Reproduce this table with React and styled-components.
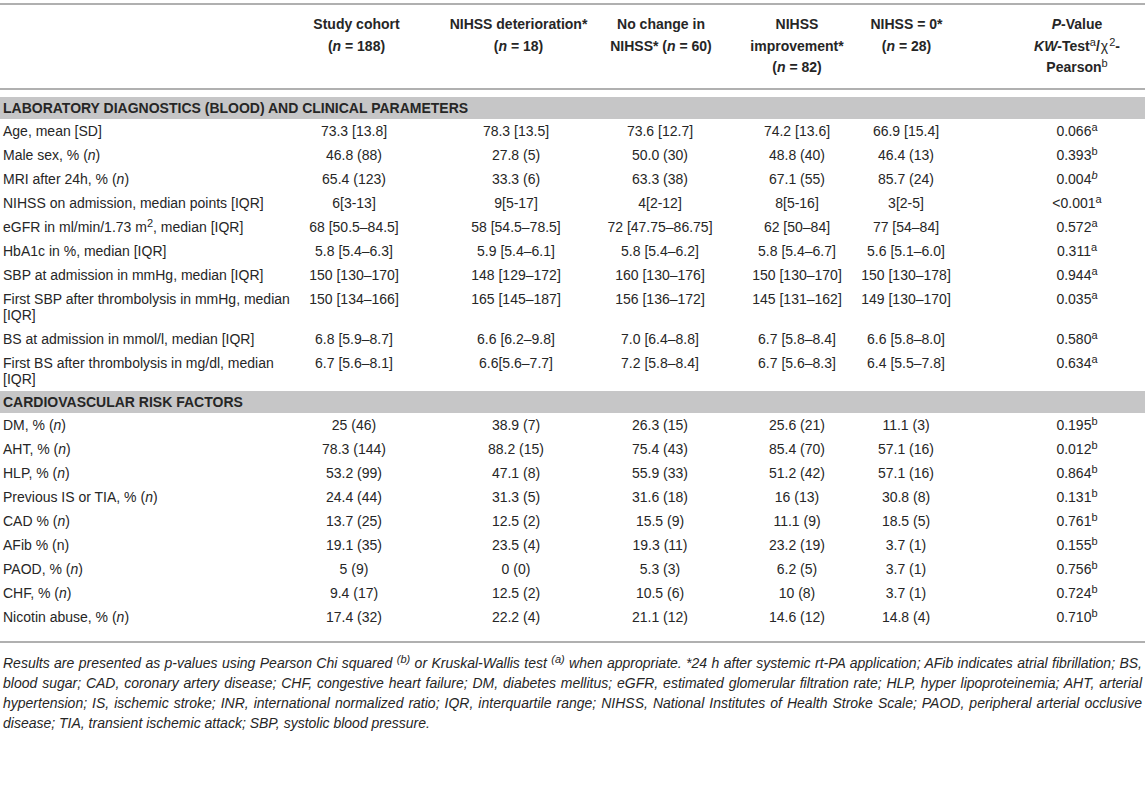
import React from 'react'
import styled, { createGlobalStyle } from 'styled-components'

const GRID = '302px 100px 188px 140px 130px 130px 155px'
const SHIFTS = [2, 20, 0, 2, -19, 9.5]
const HEAD_SHIFTS = [4.5, 22.5, 1, 2, -18.5, 9.5]

const GlobalStyle = createGlobalStyle`
  body {
    margin: 0;
    background: #ffffff;
  }
`

const Page = styled.div`
  width: 1145px;
  padding-top: 3px;
  font-family: "Liberation Sans", Arial, Helvetica, sans-serif;
  font-size: 14px;
  color: #262626;
`

const Table = styled.div`
  border-bottom: 2px solid #b0b0b0;
  padding-bottom: 12px;
`

const Row = styled.div`
  display: grid;
  grid-template-columns: ${GRID};
  padding: 4px 0;
  line-height: 16px;
`

const HeadRow = styled(Row)`
  border-top: 2px solid #b0b0b0;
  border-bottom: 2px solid #b0b0b0;
  padding: 9px 0 9px;
  margin-bottom: 7px;
  line-height: 21.5px;
  font-weight: bold;
`

const Label = styled.div`
  padding: 0 6px 0 3px;
`

const Cell = styled.div`
  text-align: center;
  white-space: nowrap;
  padding-left: ${(p) => Math.max(0, p.$shift * 2)}px;
  padding-right: ${(p) => Math.max(0, -p.$shift * 2)}px;
`

const Band = styled.div`
  height: 22px;
  line-height: 22px;
  padding-left: 3px;
  background: #c6c6c7;
  font-weight: bold;
`

const Sup = styled.sup`
  font-size: 11px;
  line-height: 0;
  vertical-align: 0.5em;
  font-weight: normal;
`

const Light = styled.span`
  font-weight: normal;
  margin: 0 1px;
`

const Notes = styled.div`
  padding: 10px 3px 0;
  font-size: 14px;
  font-style: italic;
  line-height: 20px;
`

const NoteLine = styled.div`
  text-align: justify;
  text-align-last: ${(p) => (p.$last ? 'left' : 'justify')};
`

const n = <i>n</i>

const header = [
  <>Study cohort<br />({n} = 188)</>,
  <>NIHSS deterioration*<br />({n} = 18)</>,
  <>No change in<br />NIHSS* ({n} = 60)</>,
  <>NIHSS<br />improvement*<br />({n} = 82)</>,
  <>NIHSS = 0*<br />({n} = 28)</>,
  <>
    <i>P</i>-Value
    <br />
    <i>KW</i>-Test<Sup>a</Sup>/<Light>χ</Light><Sup>2</Sup>-
    <br />
    Pearson<Sup>b</Sup>
  </>,
]

const pA = (v) => <>{v}<Sup>a</Sup></>
const pB = (v) => <>{v}<Sup>b</Sup></>
const pBi = (v) => <>{v}<Sup><i>b</i></Sup></>

const sections = [
  {
    title: 'LABORATORY DIAGNOSTICS (BLOOD) AND CLINICAL PARAMETERS',
    rows: [
      ['Age, mean [SD]', '73.3 [13.8]', '78.3 [13.5]', '73.6 [12.7]', '74.2 [13.6]', '66.9 [15.4]', pA('0.066')],
      [<>Male sex, % ({n})</>, '46.8 (88)', '27.8 (5)', '50.0 (30)', '48.8 (40)', '46.4 (13)', pB('0.393')],
      [<>MRI after 24h, % ({n})</>, '65.4 (123)', '33.3 (6)', '63.3 (38)', '67.1 (55)', '85.7 (24)', pBi('0.004')],
      ['NIHSS on admission, median points [IQR]', '6[3-13]', '9[5-17]', '4[2-12]', '8[5-16]', '3[2-5]', pA('<0.001')],
      [<>eGFR in ml/min/1.73 m<Sup>2</Sup>, median [IQR]</>, '68 [50.5–84.5]', '58 [54.5–78.5]', '72 [47.75–86.75]', '62 [50–84]', '77 [54–84]', pA('0.572')],
      ['HbA1c in %, median [IQR]', '5.8 [5.4–6.3]', '5.9 [5.4–6.1]', '5.8 [5.4–6.2]', '5.8 [5.4–6.7]', '5.6 [5.1–6.0]', pA('0.311')],
      ['SBP at admission in mmHg, median [IQR]', '150 [130–170]', '148 [129–172]', '160 [130–176]', '150 [130–170]', '150 [130–178]', pA('0.944')],
      ['First SBP after thrombolysis in mmHg, median [IQR]', '150 [134–166]', '165 [145–187]', '156 [136–172]', '145 [131–162]', '149 [130–170]', pA('0.035')],
      ['BS at admission in mmol/l, median [IQR]', '6.8 [5.9–8.7]', '6.6 [6.2–9.8]', '7.0 [6.4–8.8]', '6.7 [5.8–8.4]', '6.6 [5.8–8.0]', pA('0.580')],
      ['First BS after thrombolysis in mg/dl, median [IQR]', '6.7 [5.6–8.1]', '6.6[5.6–7.7]', '7.2 [5.8–8.4]', '6.7 [5.6–8.3]', '6.4 [5.5–7.8]', pA('0.634')],
    ],
  },
  {
    title: 'CARDIOVASCULAR RISK FACTORS',
    rows: [
      [<>DM, % ({n})</>, '25 (46)', '38.9 (7)', '26.3 (15)', '25.6 (21)', '11.1 (3)', pB('0.195')],
      [<>AHT, % ({n})</>, '78.3 (144)', '88.2 (15)', '75.4 (43)', '85.4 (70)', '57.1 (16)', pB('0.012')],
      [<>HLP, % ({n})</>, '53.2 (99)', '47.1 (8)', '55.9 (33)', '51.2 (42)', '57.1 (16)', pB('0.864')],
      [<>Previous IS or TIA, % ({n})</>, '24.4 (44)', '31.3 (5)', '31.6 (18)', '16 (13)', '30.8 (8)', pB('0.131')],
      [<>CAD % ({n})</>, '13.7 (25)', '12.5 (2)', '15.5 (9)', '11.1 (9)', '18.5 (5)', pB('0.761')],
      ['AFib % (n)', '19.1 (35)', '23.5 (4)', '19.3 (11)', '23.2 (19)', '3.7 (1)', pB('0.155')],
      [<>PAOD, % ({n})</>, '5 (9)', '0 (0)', '5.3 (3)', '6.2 (5)', '3.7 (1)', pB('0.756')],
      [<>CHF, % ({n})</>, '9.4 (17)', '12.5 (2)', '10.5 (6)', '10 (8)', '3.7 (1)', pB('0.724')],
      [<>Nicotin abuse, % ({n})</>, '17.4 (32)', '22.2 (4)', '21.1 (12)', '14.6 (12)', '14.8 (4)', pB('0.710')],
    ],
  },
]

const notes = [
  <>Results are presented as p-values using Pearson Chi squared <Sup>(b)</Sup> or Kruskal-Wallis test <Sup>(a)</Sup> when appropriate. *24 h after systemic rt-PA application; AFib indicates atrial fibrillation; BS,</>,
  'blood sugar; CAD, coronary artery disease; CHF, congestive heart failure; DM, diabetes mellitus; eGFR, estimated glomerular filtration rate; HLP, hyper lipoproteinemia; AHT, arterial',
  'hypertension; IS, ischemic stroke; INR, international normalized ratio; IQR, interquartile range; NIHSS, National Institutes of Health Stroke Scale; PAOD, peripheral arterial occlusive',
  'disease; TIA, transient ischemic attack; SBP, systolic blood pressure.',
]

function App() {
  return (
    <Page>
      <GlobalStyle />
      <Table>
        <HeadRow>
          <div />
          {header.map((h, i) => (
            <Cell key={i} $shift={HEAD_SHIFTS[i]}>{h}</Cell>
          ))}
        </HeadRow>
        {sections.map((section) => (
          <React.Fragment key={section.title}>
            <Band>{section.title}</Band>
            {section.rows.map((row, r) => (
              <Row key={r}>
                <Label>{row[0]}</Label>
                {row.slice(1).map((v, i) => (
                  <Cell key={i} $shift={SHIFTS[i]}>{v}</Cell>
                ))}
              </Row>
            ))}
          </React.Fragment>
        ))}
      </Table>
      <Notes>
        {notes.map((line, i) => (
          <NoteLine key={i} $last={i === notes.length - 1}>{line}</NoteLine>
        ))}
      </Notes>
    </Page>
  )
}

export default App
